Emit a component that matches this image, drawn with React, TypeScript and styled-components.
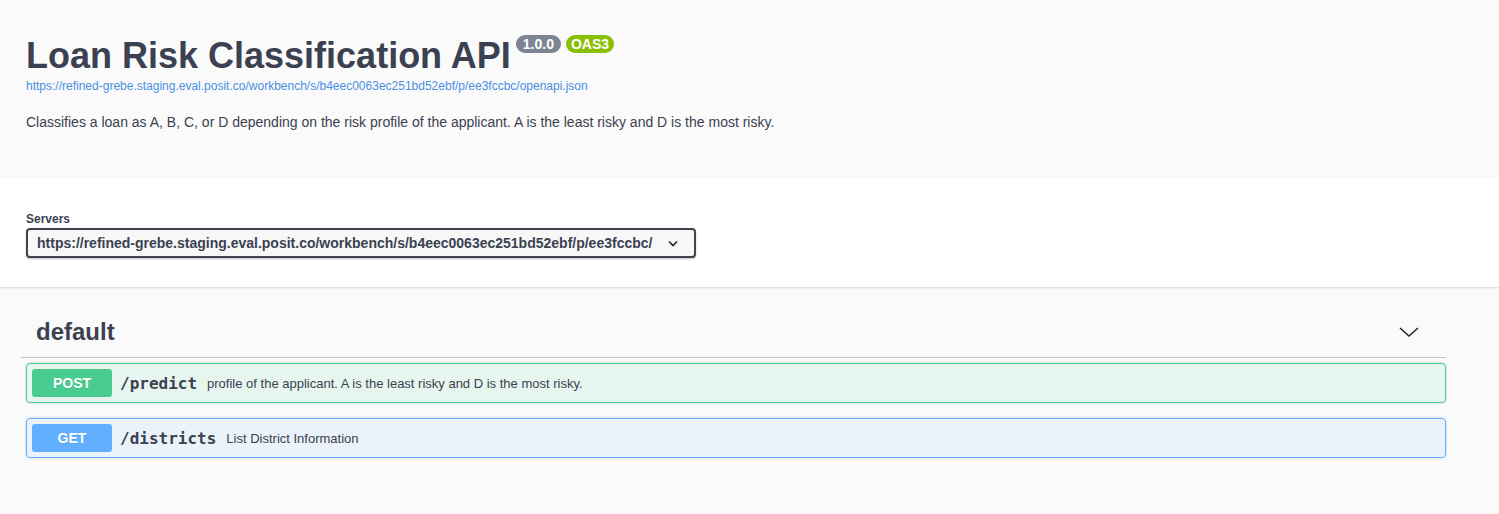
import React from "react";
import styled, { createGlobalStyle } from "styled-components";

const GlobalStyle = createGlobalStyle`
  html, body {
    margin: 0;
    padding: 0;
    background: #fafafa;
  }
  body {
    font-family: "Liberation Sans", Arial, sans-serif;
    color: #3b4151;
  }
`;

const Wrapper = styled.div`
  width: 1420px;
  margin: 0 0 0 26px;
`;

const InfoSection = styled.section`
  padding: 35px 0 46px;
`;

const Title = styled.h2`
  display: flex;
  align-items: flex-start;
  margin: 0;
  font-size: 36px;
  line-height: 42px;
  font-weight: 700;
  color: #3b4151;
`;

type badgeProps = {
  bg: string;
  pad?: string;
};
const Badge = styled.small<badgeProps>`
  display: inline-block;
  margin: 0 0 0 5px;
  height: 18px;
  padding: ${({ pad }) => (pad ? pad : "0 4px")};
  border-radius: 57px;
  background: ${({ bg }) => bg};
  color: #fff;
  font-size: 14px;
  line-height: 18px;
  font-weight: 700;
`;

const SpecLink = styled.a`
  display: block;
  margin-top: 2px;
  font-size: 12px;
  line-height: 14px;
  color: #4990e2;
  text-decoration: none;
`;

const Description = styled.p`
  margin: 19px 0 0;
  font-size: 14px;
  line-height: 20px;
  color: #3b4151;
`;

const SchemeContainer = styled.section`
  background: #fff;
  box-shadow: 0 1px 2px 0 rgba(0, 0, 0, 0.15);
  padding: 34px 0 29px;
`;

const Label = styled.label`
  display: block;
  font-size: 12px;
  line-height: 15px;
  font-weight: 700;
  color: #3b4151;
  margin-bottom: 1px;
`;

const ServerSelect = styled.div`
  display: inline-flex;
  align-items: center;
  gap: 15px;
  height: 26px;
  padding: 0 15px 0 9px;
  border: 2px solid #41444e;
  border-radius: 4px;
  background: #f7f7f7;
  box-shadow: 0 1px 2px 0 rgba(0, 0, 0, 0.25);
  font-size: 14px;
  line-height: 26px;
  font-weight: 700;
  color: #3b4151;
`;

const TagSection = styled.section`
  padding-top: 20px;
`;

const TagHeader = styled.div`
  display: flex;
  align-items: center;
  justify-content: space-between;
  margin-left: -5px;
  padding: 10px 27px 10px 15px;
  border-bottom: 1px solid rgba(59, 65, 81, 0.3);
  margin-bottom: 5px;
`;

const TagTitle = styled.h3`
  margin: 0;
  font-size: 24px;
  line-height: 30px;
  font-weight: 700;
  color: #3b4151;
`;

type methodProps = {
  color: string;
  tint: string;
};
const OpBlock = styled.div<methodProps>`
  display: flex;
  align-items: center;
  padding: 5px;
  margin-bottom: 15px;
  border: 1px solid ${({ color }) => color};
  border-radius: 4px;
  background: ${({ tint }) => tint};
  box-shadow: 0 0 3px rgba(0, 0, 0, 0.19);
`;

const Method = styled.span<{ color: string }>`
  min-width: 80px;
  height: 28px;
  border-radius: 3px;
  background: ${({ color }) => color};
  color: #fff;
  font-size: 14px;
  line-height: 28px;
  font-weight: 700;
  text-align: center;
  text-shadow: 0 1px 0 rgba(0, 0, 0, 0.1);
`;

const Path = styled.span`
  padding: 0 10px 0 8px;
  font-family: "DejaVu Sans Mono", "Liberation Mono", monospace;
  font-size: 16px;
  font-weight: 700;
  color: #3b4151;
`;

const Summary = styled.span`
  font-size: 13px;
  color: #3b4151;
`;

const ops = [
  {
    method: "POST",
    path: "/predict",
    summary: "profile of the applicant. A is the least risky and D is the most risky.",
    color: "#49cc90",
    tint: "rgba(73, 204, 144, 0.1)",
  },
  {
    method: "GET",
    path: "/districts",
    summary: "List District Information",
    color: "#61affe",
    tint: "rgba(97, 175, 254, 0.1)",
  },
];

const specUrl =
  "https://refined-grebe.staging.eval.posit.co/workbench/s/b4eec0063ec251bd52ebf/p/ee3fccbc/openapi.json";

function App() {
  return (
    <>
      <GlobalStyle />
      <InfoSection>
        <Wrapper>
          <Title>
            Loan Risk Classification API
            <Badge bg="#7d8492" pad="0 7px">
              1.0.0
            </Badge>
            <Badge bg="#89bf04" pad="0 5px">
              OAS3
            </Badge>
          </Title>
          <SpecLink href="#">{specUrl}</SpecLink>
          <Description>
            Classifies a loan as A, B, C, or D depending on the risk profile of the applicant. A is
            the least risky and D is the most risky.
          </Description>
        </Wrapper>
      </InfoSection>
      <SchemeContainer>
        <Wrapper>
          <Label>Servers</Label>
          <ServerSelect>
            https://refined-grebe.staging.eval.posit.co/workbench/s/b4eec0063ec251bd52ebf/p/ee3fccbc/
            <svg width="12" height="7" viewBox="0 0 12 7">
              <polyline points="2,1.5 6,5.5 10,1.5" fill="none" stroke="#222" strokeWidth="1.6" />
            </svg>
          </ServerSelect>
        </Wrapper>
      </SchemeContainer>
      <TagSection>
        <Wrapper>
          <TagHeader>
            <TagTitle>default</TagTitle>
            <svg width="20" height="10" viewBox="0 0 20 10">
              <polyline points="1,1 10,9 19,1" fill="none" stroke="#222" strokeWidth="1.5" />
            </svg>
          </TagHeader>
          {ops.map((op) => (
            <OpBlock key={op.path} color={op.color} tint={op.tint}>
              <Method color={op.color}>{op.method}</Method>
              <Path>{op.path}</Path>
              <Summary>{op.summary}</Summary>
            </OpBlock>
          ))}
        </Wrapper>
      </TagSection>
    </>
  );
}

export default App;
